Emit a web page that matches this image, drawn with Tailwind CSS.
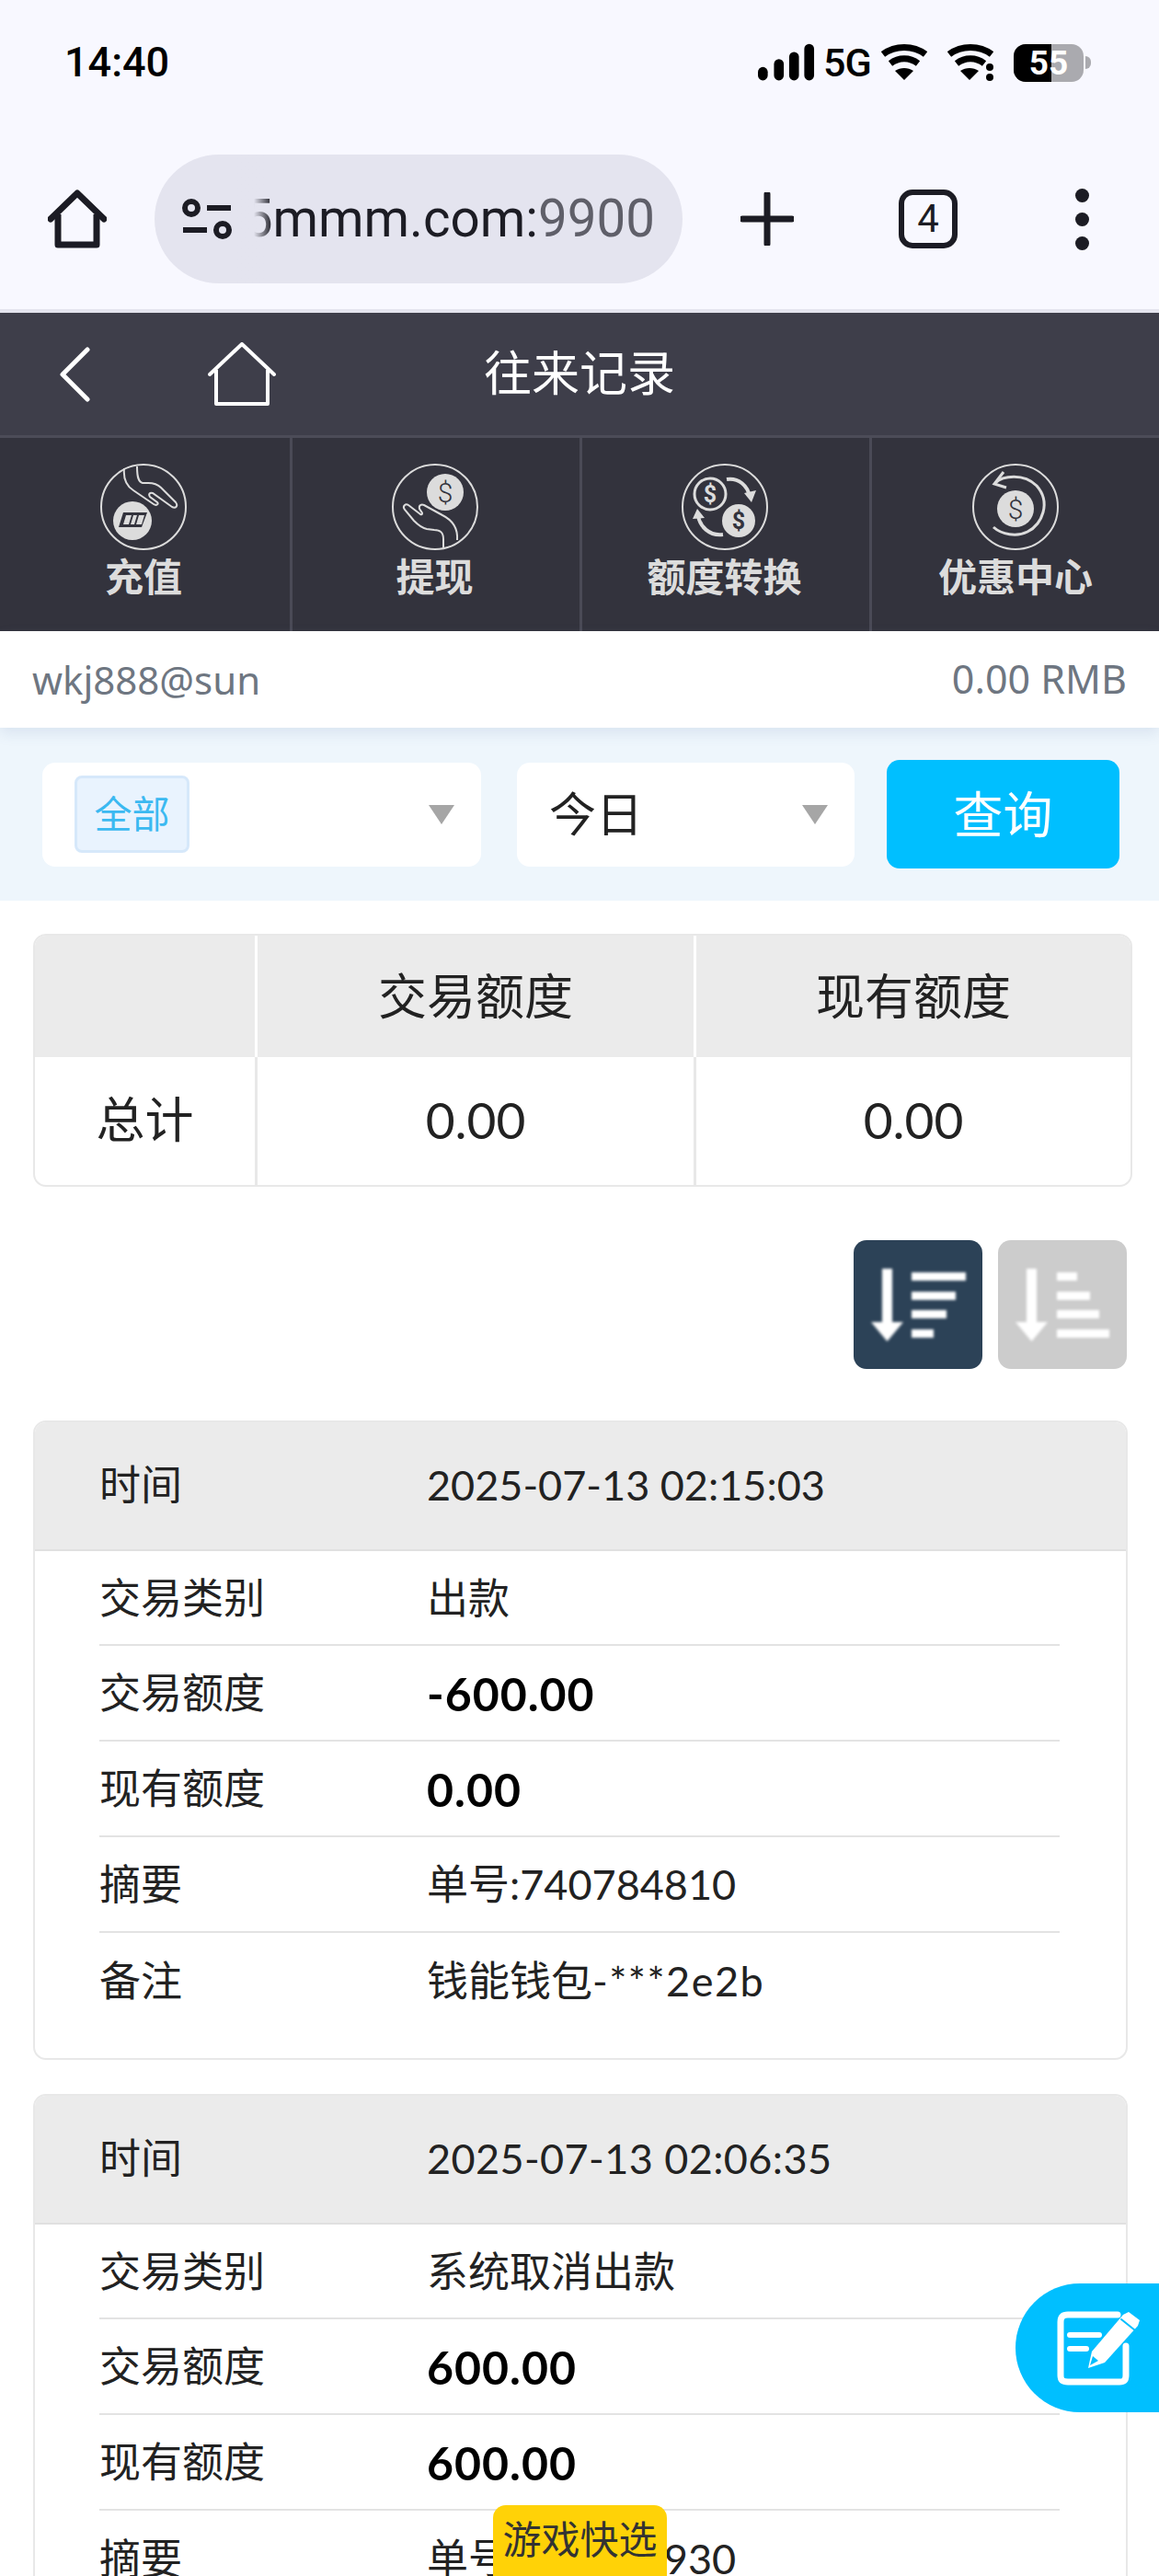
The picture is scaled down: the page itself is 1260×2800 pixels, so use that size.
<!DOCTYPE html>
<html lang="zh">

<head>
    <meta charset="UTF-8">
    <meta name="viewport" content="width=device-width, initial-scale=1.0">
    <script src="https://cdn.jsdelivr.net/npm/@tailwindcss/browser@4"></script>
    <title>往来记录</title>
</head>

<body class="bg-white">
    <div class="relative w-[1260px] h-[2800px] overflow-hidden font-['Lato','Noto_Sans_CJK_SC',sans-serif] text-[#222]">

        <!-- status bar + browser toolbar -->
        <div class="h-[340px] bg-[#f8f8ff] border-b-4 border-[#e4e4ee]">
            <div class="h-[168px] pl-[70px] pr-[74px] pt-[44px] flex items-start justify-between">
                <span class="font-['Roboto'] font-medium text-[45px] leading-[48px] text-black">14:40</span>
                <div class="flex items-center h-[44px] pt-[4px]">
                    <svg class="w-[62px] h-[42px]" viewBox="0 0 64 42" fill="#000">
                        <rect x="0" y="26" width="11" height="15" rx="5.5" />
                        <rect x="18" y="17" width="11" height="24" rx="5.5" />
                        <rect x="35" y="9" width="11" height="32" rx="5.5" />
                        <rect x="52" y="0" width="11" height="41" rx="5.5" />
                    </svg>
                    <span class="font-['Roboto'] font-medium text-[43px] leading-[40px] text-black ml-[9px] w-[50px] tracking-[-1px]">5G</span>
                    <svg class="w-[50px] h-[40px] ml-[13px]" viewBox="0 0 50 40" fill="none" stroke="#000" stroke-width="7">
                        <path d="M2 11C15 1 35 1 48 11" />
                        <path d="M10 21C19 14 31 14 40 21" />
                        <path d="M25 39L15 29C21 25 29 25 35 29Z" fill="#000" stroke="none" />
                    </svg>
                    <svg class="w-[50px] h-[40px] ml-[22px]" viewBox="0 0 50 40" fill="none" stroke="#000" stroke-width="7">
                        <path d="M2 11C15 1 35 1 48 11" />
                        <path d="M10 21C19 14 31 14 40 21" />
                        <path d="M24 39L14 29C20 25 28 25 34 29Z" fill="#000" stroke="none" />
                        <circle cx="46" cy="25" r="4" fill="#000" stroke="none" />
                        <circle cx="46" cy="36" r="4" fill="#000" stroke="none" />
                    </svg>
                    <div class="relative w-[76px] h-[41px] ml-[22px] rounded-[13px] overflow-hidden bg-[#aaaaaf] flex items-center justify-center">
                        <div class="absolute left-0 top-0 w-[41px] h-full bg-black"></div>
                        <span class="relative font-['Roboto'] font-bold text-[37px] leading-[41px] text-white">55</span>
                    </div>
                    <div class="w-[6px] h-[14px] ml-[2px] rounded-r-full bg-[#aaaaaf]"></div>
                </div>
            </div>
            <div class="flex items-center h-[140px]">
                <svg class="w-[64px] h-[64px] ml-[52px]" viewBox="0 0 64 64" fill="none" stroke="#1c1c24" stroke-width="7" stroke-linejoin="round">
                    <path d="M3 32L32 4L61 32" stroke-linecap="round" />
                    <path d="M11 27V60H53V27" />
                </svg>
                <div class="relative flex items-center w-[574px] h-[140px] ml-[52px] rounded-full bg-[#e4e4ef] overflow-hidden">
                    <svg class="w-[54px] h-[46px] ml-[30px]" viewBox="0 0 54 46" fill="none" stroke="#1c1c24" stroke-width="6">
                        <circle cx="10" cy="11" r="7" />
                        <path d="M27 11H53" />
                        <path d="M1 35H27" />
                        <circle cx="44" cy="35" r="7" />
                    </svg>
                    <span class="absolute right-[30px] top-[38px] text-[56.5px] leading-[64px] font-['Roboto'] text-[#1c1c24] whitespace-nowrap">5mmm.com:<span class="text-[#5f5f69]">9900</span></span>
                    <div class="absolute left-[88px] top-0 w-[40px] h-full bg-gradient-to-r from-[#e4e4ef] via-[#e4e4ef] to-[#e4e4ef]/0"></div>
                </div>
                <svg class="w-[58px] h-[58px] ml-[63px]" viewBox="0 0 58 58" fill="none" stroke="#1c1c24" stroke-width="7" stroke-linecap="round">
                    <path d="M29 2V56" />
                    <path d="M2 29H56" />
                </svg>
                <div class="flex items-center justify-center w-[64px] h-[64px] ml-[114px] rounded-[15px] border-[6px] border-[#1c1c24] font-['Roboto'] text-[42px] leading-none text-[#1c1c24]">4</div>
                <div class="flex flex-col gap-[11px] ml-[128px]">
                    <span class="w-[15px] h-[15px] rounded-full bg-[#1c1c24]"></span>
                    <span class="w-[15px] h-[15px] rounded-full bg-[#1c1c24]"></span>
                    <span class="w-[15px] h-[15px] rounded-full bg-[#1c1c24]"></span>
                </div>
            </div>
        </div>

        <!-- page header -->
        <header class="relative flex items-center h-[136px] bg-[#3e3e4a] border-b-[3px] border-[#4c4c58]">
            <svg class="w-[34px] h-[60px] ml-[64px]" viewBox="0 0 34 60" fill="none" stroke="#fff" stroke-width="5" stroke-linecap="round" stroke-linejoin="round">
                <path d="M31 3L4 30L31 57" />
            </svg>
            <svg class="w-[74px] h-[70px] ml-[128px]" viewBox="0 0 74 70" fill="none" stroke="#fff" stroke-width="4" stroke-linejoin="round">
                <path d="M2 35L37 2L72 35" stroke-linecap="round" />
                <path d="M9 30V67H65V30" />
            </svg>
            <h1 class="absolute left-[526px] top-[32px] text-[52px] leading-[66px] text-white font-normal">往来记录</h1>
        </header>

        <!-- nav tabs -->
        <nav class="grid grid-cols-[318px_315px_315px_1fr] h-[210px] bg-[#33333d] text-[#dcdcdc]">
            <a class="flex flex-col items-center pt-[28px] pr-[3px] border-r-[3px] border-[#4a4a56]">
                <svg class="w-[94px] h-[94px]" viewBox="0 0 94 94" fill="none" stroke="#dcdcdc" stroke-width="2">
                    <circle cx="47" cy="47" r="46" />
                    <path d="M26 5C25 15 28 24 36 29L58 44C61 46 64 44 62 42L54 36C52 33 54 31 57 32L78 47C82 49 85 46 82 42L66 26C62 22 58 21 52 21L46 21C42 20 40 16 40 3" />
                    <circle cx="35" cy="62" r="21" fill="#dcdcdc" stroke="none" />
                    <path d="M25 53H51L45 69H20Z" fill="#33333d" stroke="none" />
                    <path d="M28 56H34L31 66H25Z M36 56H40L37 66H33Z M42 56H48L45 66H39Z" fill="#dcdcdc" stroke="none" />
                </svg>
                <span class="mt-[1px] text-[42px] leading-[56px] font-bold">充值</span>
            </a>
            <a class="flex flex-col items-center pt-[28px] pr-[3px] border-r-[3px] border-[#4a4a56]">
                <svg class="w-[94px] h-[94px]" viewBox="0 0 94 94" fill="none" stroke="#dcdcdc" stroke-width="2">
                    <circle cx="47" cy="47" r="46" />
                    <path d="M56 91L56 82C56 74 52 72 46 72L38 71C32 70 28 66 24 62L14 50C11 46 15 43 18 45L31 55C33 56 34 54 32 52L30 49C29 45 32 44 35 45L55 56C65 61 72 70 71 83" />
                    <circle cx="58" cy="31" r="20" fill="#dcdcdc" stroke="none" />
                    <text x="58" y="42" text-anchor="middle" font-family="Roboto" font-weight="300" font-size="30" fill="#33333d" stroke="none">$</text>
                </svg>
                <span class="mt-[1px] text-[42px] leading-[56px] font-bold">提现</span>
            </a>
            <a class="flex flex-col items-center pt-[28px] pr-[3px] border-r-[3px] border-[#4a4a56]">
                <svg class="w-[94px] h-[94px]" viewBox="0 0 94 94" fill="none" stroke="#dcdcdc" stroke-width="2">
                    <circle cx="47" cy="47" r="46" />
                    <circle cx="31" cy="33" r="17" stroke-width="3" />
                    <text x="31" y="42" text-anchor="middle" font-family="Roboto" font-weight="700" font-size="25" fill="#dcdcdc" stroke="none">$</text>
                    <circle cx="62" cy="62" r="18" fill="#dcdcdc" stroke="none" />
                    <text x="62" y="71" text-anchor="middle" font-family="Roboto" font-weight="700" font-size="25" fill="#33333d" stroke="none">$</text>
                    <path d="M49 17C62 15 72 24 74 36" stroke-width="4" />
                    <path d="M68 32L76 42L81 29Z" fill="#dcdcdc" stroke="none" />
                    <path d="M45 77C30 79 20 68 18 57" stroke-width="4" />
                    <path d="M12 60L17 49L25 59Z" fill="#dcdcdc" stroke="none" />
                </svg>
                <span class="mt-[1px] text-[42px] leading-[56px] font-bold">额度转换</span>
            </a>
            <a class="flex flex-col items-center pt-[28px]">
                <svg class="w-[94px] h-[94px]" viewBox="0 0 94 94" fill="none" stroke="#dcdcdc" stroke-width="2">
                    <circle cx="47" cy="47" r="46" />
                    <path d="M25 21C33 13 56 10 70 24C86 42 76 66 60 74C48 80 32 77 23 69" stroke-width="3" />
                    <path d="M34 9L24 22L37 26" stroke-width="3" />
                    <circle cx="47" cy="49" r="20" fill="#dcdcdc" stroke="none" />
                    <text x="47" y="60" text-anchor="middle" font-family="Roboto" font-weight="300" font-size="30" fill="#33333d" stroke="none">$</text>
                </svg>
                <span class="mt-[1px] text-[42px] leading-[56px] font-bold">优惠中心</span>
            </a>
        </nav>

        <!-- account row -->
        <div class="relative z-10 flex items-center justify-between h-[105px] px-[35px] bg-white font-['Noto_Sans'] text-[43px] text-[#6e7681] shadow-[0_6px_14px_rgba(90,120,170,0.14)]">
            <span class="text-[42px]">wkj888@sun</span>
            <span>0.00 RMB</span>
        </div>

        <!-- filter band -->
        <div class="flex items-center h-[188px] pl-[46px] bg-[#eef6fc]">
            <div class="flex items-center justify-between w-[477px] h-[113px] pl-[35px] pr-[29px] rounded-[14px] bg-white">
                <span class="flex items-center justify-center w-[125px] h-[84px] rounded-[8px] border-[3px] border-[#d6e8fa] bg-[#e9f3fe] text-[41px] text-[#3bb9f1]">全部</span>
                <span class="w-0 h-0 border-x-[14px] border-t-[21px] border-x-transparent border-t-[#a6a6a6]"></span>
            </div>
            <div class="flex items-center justify-between w-[367px] h-[113px] ml-[39px] pl-[35px] pr-[29px] rounded-[14px] bg-white">
                <span class="text-[51px] text-[#222]">今日</span>
                <span class="w-0 h-0 border-x-[14px] border-t-[21px] border-x-transparent border-t-[#a6a6a6]"></span>
            </div>
            <button class="w-[253px] h-[118px] ml-[35px] rounded-[14px] bg-[#00bfff] text-[54px] text-white">查询</button>
        </div>

        <!-- totals table -->
        <div class="mt-[36px] ml-[36px] w-[1195px] h-[275px] rounded-[14px] border-2 border-[#e8e8e8] overflow-hidden text-[53px] text-[#222]">
            <div class="grid grid-cols-[242px_477px_1fr] h-[132px] bg-[#ebebeb] text-center leading-[132px]">
                <div class="border-r-[3px] border-white"></div>
                <div class="border-r-[3px] border-white">交易额度</div>
                <div>现有额度</div>
            </div>
            <div class="grid grid-cols-[242px_477px_1fr] h-[139px] text-center leading-[136px]">
                <div class="border-r-[3px] border-[#e8e8e8]">总计</div>
                <div class="border-r-[3px] border-[#e8e8e8] text-[55px]">0.00</div>
                <div class="text-[55px]">0.00</div>
            </div>
        </div>

        <!-- sort buttons -->
        <div class="flex justify-end gap-[17px] mt-[58px] pr-[35px]">
            <button class="w-[140px] h-[140px] rounded-[14px] bg-[#2c4257]">
                <svg class="w-[140px] h-[140px] blur-[1.5px]" viewBox="0 0 140 140" fill="#fff">
                    <rect x="31" y="31" width="11" height="62" />
                    <path d="M19 89H54L36.500 110Z" />
                    <rect x="63" y="35" width="59" height="9" />
                    <rect x="63" y="56" width="48" height="9" />
                    <rect x="63" y="76" width="38" height="9" />
                    <rect x="63" y="97" width="24" height="9" />
                </svg>
            </button>
            <button class="w-[140px] h-[140px] rounded-[14px] bg-[#cccccc]">
                <svg class="w-[140px] h-[140px] blur-[1.5px]" viewBox="0 0 140 140" fill="#fff">
                    <rect x="31" y="31" width="11" height="62" />
                    <path d="M19 89H54L36.500 110Z" />
                    <rect x="64" y="35" width="22" height="9" />
                    <rect x="64" y="56" width="36" height="9" />
                    <rect x="64" y="76" width="46" height="9" />
                    <rect x="64" y="97" width="57" height="9" />
                </svg>
            </button>
        </div>

        <!-- record 1 -->
        <section class="mt-[56px] ml-[36px] w-[1190px] h-[695px] rounded-[14px] border-2 border-[#e8e8e8] overflow-hidden text-[45px] text-[#222]">
            <div class="flex items-center h-[140px] pl-[70px] bg-[#ebebeb] border-b-2 border-[#e0e0e0]">
                <span class="w-[356px]">时间</span><span>2025-07-13 02:15:03</span>
            </div>
            <div class="ml-[70px] w-[1044px]">
                <div class="flex items-center h-[103px] pt-[2px] border-b-2 border-[#e3e3e3]"><span class="w-[356px]">交易类别</span><span>出款</span></div>
                <div class="flex items-center h-[104px] pt-[2px] border-b-2 border-[#e3e3e3]"><span class="w-[356px]">交易额度</span><span class="font-bold text-[50px] tracking-[1px] text-black">-600.00</span></div>
                <div class="flex items-center h-[104px] pt-[2px] border-b-2 border-[#e3e3e3]"><span class="w-[356px]">现有额度</span><span class="font-bold text-[50px] tracking-[1px] text-black">0.00</span></div>
                <div class="flex items-center h-[104px] pt-[2px] border-b-2 border-[#e3e3e3]"><span class="w-[356px]">摘要</span><span>单号:740784810</span></div>
                <div class="flex items-center h-[104px] pt-[2px]"><span class="w-[356px]">备注</span><span>钱能钱包<span class="tracking-[1.5px]">-***2e2b</span></span></div>
            </div>
        </section>

        <!-- record 2 -->
        <section class="mt-[37px] ml-[36px] w-[1190px] h-[694px] rounded-[14px] border-2 border-[#e8e8e8] overflow-hidden text-[45px] text-[#222]">
            <div class="flex items-center h-[140px] pl-[70px] bg-[#ebebeb] border-b-2 border-[#e0e0e0]">
                <span class="w-[356px]">时间</span><span class="tracking-[0.4px]">2025-07-13 02:06:35</span>
            </div>
            <div class="ml-[70px] w-[1044px]">
                <div class="flex items-center h-[103px] pt-[2px] border-b-2 border-[#e3e3e3]"><span class="w-[356px]">交易类别</span><span>系统取消出款</span></div>
                <div class="flex items-center h-[104px] pt-[2px] border-b-2 border-[#e3e3e3]"><span class="w-[356px]">交易额度</span><span class="font-bold text-[50px] tracking-[1px] text-black">600.00</span></div>
                <div class="flex items-center h-[104px] pt-[2px] border-b-2 border-[#e3e3e3]"><span class="w-[356px]">现有额度</span><span class="font-bold text-[50px] tracking-[1px] text-black">600.00</span></div>
                <div class="flex items-center h-[104px] pt-[2px]"><span class="w-[356px]">摘要</span><span>单号:740784930</span></div>
            </div>
        </section>

        <!-- floating edit button -->
        <button class="absolute right-0 top-[2482px] w-[156px] h-[140px] rounded-l-[70px] bg-[#00bfff]">
            <svg class="absolute left-[45px] top-[30px] w-[96px] h-[84px]" viewBox="0 0 96 84" fill="none" stroke="#fff" stroke-width="7" stroke-linecap="round" stroke-linejoin="round">
                <path d="M66 4H12C6 4 4 7 4 12V70C4 75 6 77 12 77H68C73 77 75 75 75 70V38" />
                <path d="M14 26H46M14 41H32" stroke-width="6" />
                <path d="M34 62L38 44L72 4L78 1L90 10L88 16L52 56Z" fill="#fff" stroke="none" />
                <path d="M70 9L85 21" stroke="#00bfff" stroke-width="2" />
                <path d="M36 59L39 49L45 54Z" fill="#00bfff" stroke="none" />
            </svg>
        </button>

        <!-- game picker tab -->
        <div class="absolute left-[536px] top-[2723px] w-[189px] h-[77px] pt-[12px] rounded-t-[14px] bg-[#ffd207] text-center text-[42px] leading-[50px] text-[#333]">游戏快选</div>
    </div>
</body>

</html>
